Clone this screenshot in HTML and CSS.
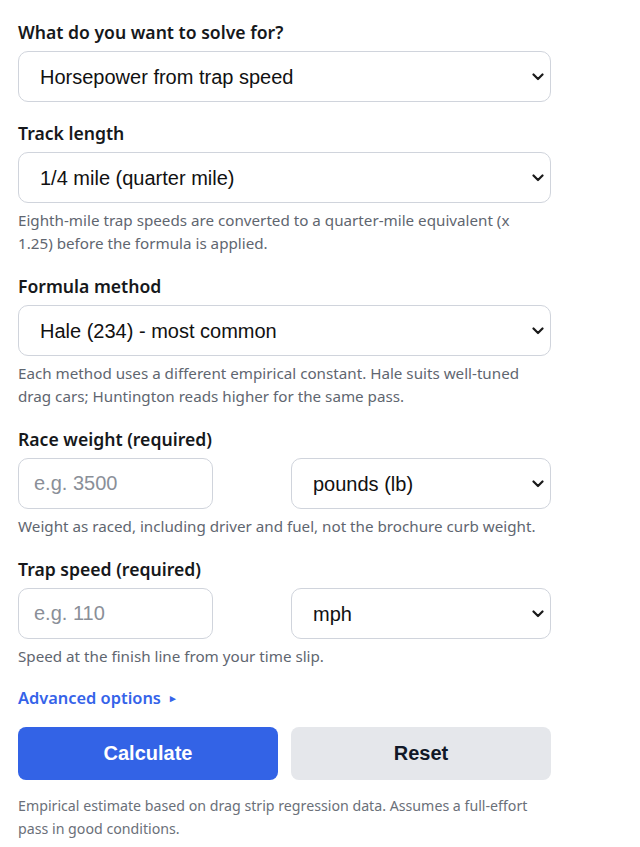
FILE: index.html
```html
<!DOCTYPE html>
<html lang="en">
<head>
<meta charset="utf-8">
<title>Horsepower from trap speed</title>
<link rel="stylesheet" href="styles.css">
</head>
<body>
<form class="calc">
  <div class="field">
    <label class="label" for="solve">What do you want to solve for?</label>
    <div class="sel">
      <select id="solve" class="control">
        <option>Horsepower from trap speed</option>
      </select>
      <svg class="chev" viewBox="0 0 12 8" width="12" height="8"><path d="M1.5 1.5 L6 6 L10.5 1.5" fill="none" stroke="#1a1a1a" stroke-width="2.2" stroke-linecap="round" stroke-linejoin="round"/></svg>
    </div>
  </div>
  <div class="field">
    <label class="label" for="track">Track length</label>
    <div class="sel">
      <select id="track" class="control">
        <option>1/4 mile (quarter mile)</option>
      </select>
      <svg class="chev" viewBox="0 0 12 8" width="12" height="8"><path d="M1.5 1.5 L6 6 L10.5 1.5" fill="none" stroke="#1a1a1a" stroke-width="2.2" stroke-linecap="round" stroke-linejoin="round"/></svg>
    </div>
    <p class="help">Eighth-mile trap speeds are converted to a quarter-mile equivalent (x<br>1.25) before the formula is applied.</p>
  </div>
  <div class="field">
    <label class="label" for="method">Formula method</label>
    <div class="sel">
      <select id="method" class="control">
        <option>Hale (234) - most common</option>
      </select>
      <svg class="chev" viewBox="0 0 12 8" width="12" height="8"><path d="M1.5 1.5 L6 6 L10.5 1.5" fill="none" stroke="#1a1a1a" stroke-width="2.2" stroke-linecap="round" stroke-linejoin="round"/></svg>
    </div>
    <p class="help">Each method uses a different empirical constant. Hale suits well-tuned drag cars; Huntington reads higher for the same pass.</p>
  </div>
  <div class="field">
    <label class="label" for="weight">Race weight (required)</label>
    <div class="pair">
      <input id="weight" class="control input" type="text" placeholder="e.g. 3500">
      <div class="sel unit">
        <select class="control">
          <option>pounds (lb)</option>
        </select>
        <svg class="chev" viewBox="0 0 12 8" width="12" height="8"><path d="M1.5 1.5 L6 6 L10.5 1.5" fill="none" stroke="#1a1a1a" stroke-width="2.2" stroke-linecap="round" stroke-linejoin="round"/></svg>
      </div>
    </div>
    <p class="help">Weight as raced, including driver and fuel, not the brochure curb weight.</p>
  </div>
  <div class="field">
    <label class="label" for="speed">Trap speed (required)</label>
    <div class="pair">
      <input id="speed" class="control input" type="text" placeholder="e.g. 110">
      <div class="sel unit">
        <select class="control">
          <option>mph</option>
        </select>
        <svg class="chev" viewBox="0 0 12 8" width="12" height="8"><path d="M1.5 1.5 L6 6 L10.5 1.5" fill="none" stroke="#1a1a1a" stroke-width="2.2" stroke-linecap="round" stroke-linejoin="round"/></svg>
      </div>
    </div>
    <p class="help">Speed at the finish line from your time slip.</p>
  </div>
  <div class="advanced">Advanced options <span class="tri">&#9656;</span></div>
  <div class="actions">
    <button type="button" class="btn primary">Calculate</button>
    <button type="button" class="btn secondary">Reset</button>
  </div>
  <p class="note">Empirical estimate based on drag strip regression data. Assumes a full-effort pass in good conditions.</p>
</form>
</body>
</html>
```
FILE: styles.css
```css
html, body {
  margin: 0;
  padding: 0;
  background: #ffffff;
}
body {
  font-family: "Noto Sans", "Open Sans", sans-serif;
  color: #1f2328;
}
.calc {
  width: 533px;
  padding: 20px 0 0 18px;
  box-sizing: content-box;
}
.field {
  display: flex;
  flex-direction: column;
  margin-bottom: 19px;
}
.label {
  font-size: 17.6px;
  line-height: 24px;
  font-weight: 600;
  color: #16181b;
  margin-bottom: 7px;
}
.control {
  font-family: "Liberation Sans", Arial, sans-serif;
  font-size: 20px;
  color: #111111;
  height: 51px;
  border: 1px solid #d0d4dc;
  border-radius: 10px;
  background: #ffffff;
  box-sizing: border-box;
  padding: 0 15px;
  width: 533px;
  display: block;
}
.sel {
  position: relative;
  width: 533px;
}
.sel .control {
  width: 100%;
  -webkit-appearance: none;
  appearance: none;
  padding-left: 21px;
  padding-right: 30px;
}
.chev {
  position: absolute;
  right: 7px;
  top: 22px;
  pointer-events: none;
}
.pair {
  display: flex;
  justify-content: space-between;
  width: 533px;
}
.input {
  width: 195px;
}
.input::placeholder {
  color: #8a8f98;
}
.sel.unit {
  width: 260px;
}
.help {
  margin: 6px 0 0;
  font-size: 15.2px;
  line-height: 23px;
  color: #5f6670;
}
.advanced {
  font-size: 16.4px;
  line-height: 24px;
  font-weight: 600;
  color: #3563e9;
  margin-top: -1px;
}
.tri {
  font-size: 11px;
  margin-left: 5px;
  vertical-align: 2px;
}
.actions {
  display: grid;
  grid-template-columns: 260px 260px;
  column-gap: 13px;
  margin-top: 17px;
}
.btn {
  height: 53px;
  border: none;
  border-radius: 8px;
  font-family: "Liberation Sans", Arial, sans-serif;
  font-size: 20px;
  font-weight: 700;
}
.primary {
  background: #3363e6;
  color: #ffffff;
}
.secondary {
  background: #e5e7eb;
  color: #111827;
}
.note {
  margin: 14px 0 0;
  font-size: 14.2px;
  line-height: 23px;
  color: #6b7079;
}
```
